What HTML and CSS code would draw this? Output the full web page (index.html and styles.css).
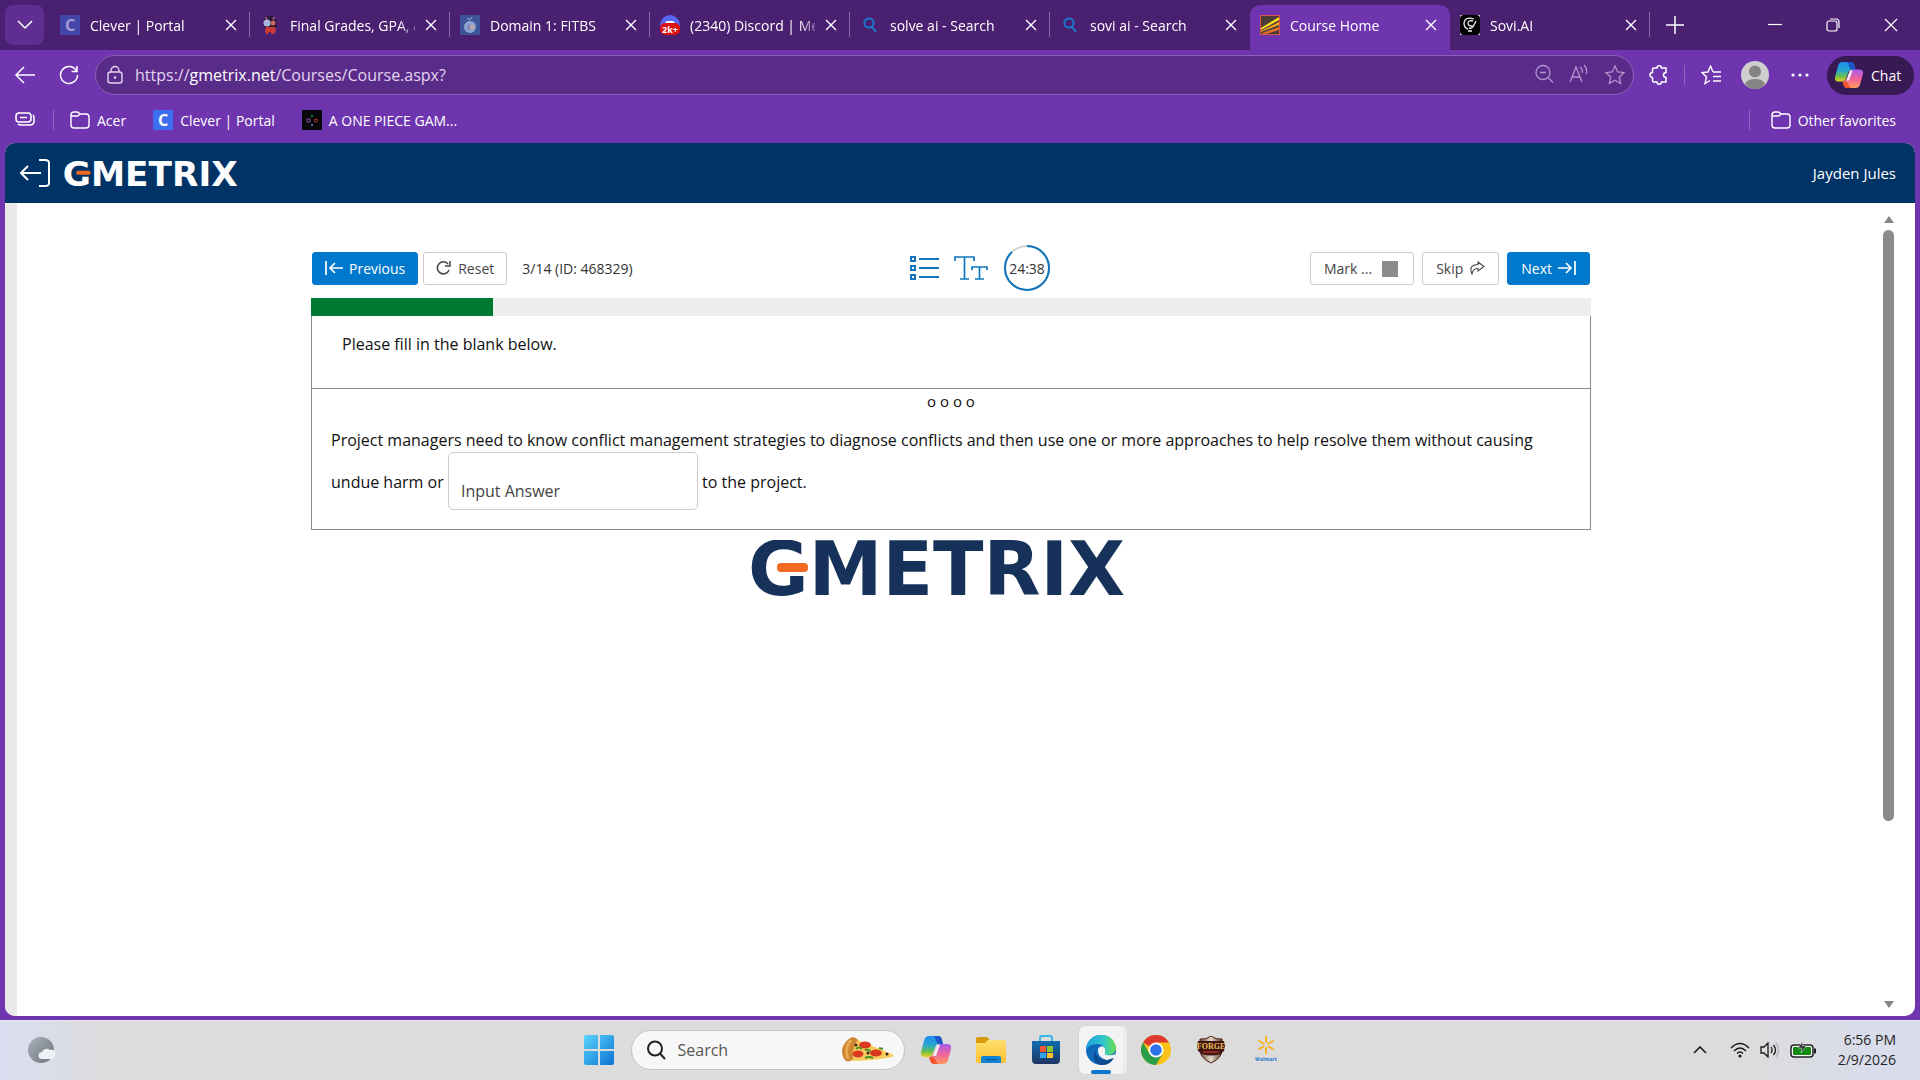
FILE: index.html
```html
<!DOCTYPE html>
<html lang="en">
<head>
<meta charset="utf-8">
<title>Course Home</title>
<link rel="stylesheet" href="styles.css">
</head>
<body>
<svg class="defs" aria-hidden="true">
  <defs>
    <linearGradient id="cpA" x1="0" y1="0" x2="0" y2="1"><stop offset="0" stop-color="#1d8df0"/><stop offset=".45" stop-color="#2aa7c9"/><stop offset=".75" stop-color="#6cc04a"/><stop offset="1" stop-color="#f0cf1c"/></linearGradient>
    <linearGradient id="cpB" x1="0" y1="0" x2="0" y2="1"><stop offset="0" stop-color="#a65cf0"/><stop offset=".5" stop-color="#f0629a"/><stop offset="1" stop-color="#ff9a5c"/></linearGradient>
    <linearGradient id="win" x1="0" y1="0" x2="1" y2="1"><stop offset="0" stop-color="#5cd3fb"/><stop offset="1" stop-color="#0a74d6"/></linearGradient>
    <linearGradient id="fold" x1="0" y1="0" x2="0" y2="1"><stop offset="0" stop-color="#ffdf6e"/><stop offset="1" stop-color="#fbc02f"/></linearGradient>
    <linearGradient id="store" x1="0" y1="0" x2="0" y2="1"><stop offset="0" stop-color="#0f6cb0"/><stop offset="1" stop-color="#1d3563"/></linearGradient>
    <linearGradient id="edgeTop" x1="0" y1="0" x2="1" y2="0"><stop offset="0" stop-color="#1f9fe0"/><stop offset=".6" stop-color="#32c8c8"/><stop offset="1" stop-color="#6be04a"/></linearGradient>
    <linearGradient id="shield" x1="0" y1="0" x2="1" y2="0"><stop offset="0" stop-color="#6b4a2c"/><stop offset=".5" stop-color="#e6dccb"/><stop offset="1" stop-color="#5a3a22"/></linearGradient>
    <linearGradient id="moon" x1="0" y1="0" x2="1" y2="1"><stop offset="0" stop-color="#a9b0b8"/><stop offset="1" stop-color="#6d757e"/></linearGradient>
    <symbol id="x" viewBox="0 0 12 12"><path d="M1 1l10 10M11 1L1 11" fill="none" stroke="currentColor" stroke-width="1.4"/></symbol>
    <symbol id="glass" viewBox="0 0 20 20"><g fill="none" stroke="#1b78d0" stroke-width="2"><circle cx="9" cy="8" r="4.6"/><path d="M12 12l4 4.5"/></g></symbol>
    <symbol id="folder" viewBox="0 0 20 20"><path d="M1 5a3 3 0 013-3h3q1 0 2 1l1 1h6a3 3 0 013 3v8a3 3 0 01-3 3H4a3 3 0 01-3-3zM1 6h6q1 0 2-1l1-1" fill="none" stroke="currentColor" stroke-width="1.4"/></symbol>
    <symbol id="copilot" viewBox="0 0 30 28">
      <path d="M8 0h9q3 0 4 4l1 4h-4q-3 0-4 4l-2 5q-1 4-5 4H4q-5 0-4-5L3 5Q4 0 8 0z" fill="url(#cpA)"/>
      <path d="M13 0h4q3 0 4 4l1 4h-4q-2 0-3-4-1-3-2-4z" fill="#1b55c9"/>
      <path d="M22 28h-9q-3 0-4-4l-1-3q3 0 5-4l2-5q1-4 5-4h6q5 0 4 5l-3 11q-1 4-5 4z" fill="url(#cpB)"/>
      <path d="M17 28h-4q-3 0-4-4l-1-3q5 0 6 2 1 4 3 5z" fill="#f2542d"/>
      <path d="M16 9h3l-4 11h-3z" fill="#f3e9f3"/>
    </symbol>
    <symbol id="gmetrix" viewBox="0 0 400 56">
      <text x="-3" y="55" class="wordmark">GMETRIX</text>
      <rect class="logo-gap" x="24" y="21" width="37" height="15"/>
      <rect x="26" y="23" width="31" height="9" rx="4" fill="#f26a21"/>
    </symbol>
  </defs>
</svg>

<div class="browser">
  <header class="tabstrip">
    <button class="tab-menu" aria-label="Tab actions"><svg width="16" height="10" viewBox="0 0 16 10"><path d="M1 1l7 7 7-7" fill="none" stroke="currentColor" stroke-width="1.5"/></svg></button>
    <nav class="tabs" aria-label="Tabs">
      <div class="tab"><span class="fav fav-c dim">C</span><span class="title">Clever | Portal</span><button class="close" aria-label="Close tab"><svg><use href="#x"/></svg></button></div>
      <div class="tab"><svg class="fav" viewBox="0 0 20 20"><path d="M4 5q1-4 6-4t6 4l1 6-3 3H6l-2-3z" fill="#2c1638"/><path d="M5 2l3 1-2 2zM15 2l-3 1 2 2z" fill="#b9727a"/><circle cx="7" cy="8" r="3.500" fill="#a9b7dd"/><circle cx="13" cy="8" r="2.500" fill="#c96a63"/><path d="M6 12h9l1 4-2 3h-3v-2h-2l-1 2H6l-1-3z" fill="#c93a34"/></svg><span class="title">Final Grades, GPA, &amp; Cre</span><button class="close" aria-label="Close tab"><svg><use href="#x"/></svg></button></div>
      <div class="tab"><svg class="fav" viewBox="0 0 20 20"><rect width="20" height="20" fill="#3f5398"/><path d="M7 3l3 2 2-3" stroke="#8fb6d8" fill="none"/><circle cx="10" cy="12" r="6" fill="#8ea6cf"/><path d="M7 13q0-4 3-4v6q-3 1-3-2z" fill="#7d86bb"/><circle cx="12" cy="12" r="2" fill="#c8a7a0"/></svg><span class="title">Domain 1: FITBS</span><button class="close" aria-label="Close tab"><svg><use href="#x"/></svg></button></div>
      <div class="tab"><svg class="fav" viewBox="0 0 20 20"><circle cx="10" cy="10" r="10" fill="#5865f2"/><path d="M5 8q1-2 3-2h4q2 0 3 2z" fill="#fff"/><rect y="8" width="20" height="12" rx="5" fill="#d8100f"/><text x="10" y="18" text-anchor="middle" class="badge">2k+</text></svg><span class="title">(2340) Discord | Messages</span><button class="close" aria-label="Close tab"><svg><use href="#x"/></svg></button></div>
      <div class="tab"><svg class="fav"><use href="#glass"/></svg><span class="title">solve ai - Search</span><button class="close" aria-label="Close tab"><svg><use href="#x"/></svg></button></div>
      <div class="tab"><svg class="fav"><use href="#glass"/></svg><span class="title">sovi ai - Search</span><button class="close" aria-label="Close tab"><svg><use href="#x"/></svg></button></div>
      <div class="tab active"><svg class="fav" viewBox="0 0 20 20"><rect x=".5" y=".5" width="19" height="19" fill="#4a3b35" stroke="#d9534f"/><path d="M1 13L19 2v3L1 15z" fill="#ffe11c"/><path d="M1 16L19 7v3L1 17z" fill="#f6a821"/><path d="M1 18.500l18-6.500v3L6 19z" fill="#e8702a"/></svg><span class="title">Course Home</span><button class="close" aria-label="Close tab"><svg><use href="#x"/></svg></button></div>
      <div class="tab"><svg class="fav" viewBox="0 0 20 20"><rect width="20" height="20" fill="#cfc3dd"/><rect width="20" height="20" rx="4"/><path d="M14 4Q5 1 4 8q0 5 4 6M13 6q-5-1-5 2t4 3q1 3-3 2M13 12l3-6M8 16h4" fill="none" stroke="#eee" stroke-width="1.3"/></svg><span class="title">Sovi.AI</span><button class="close" aria-label="Close tab"><svg><use href="#x"/></svg></button></div>
    </nav>
    <button class="new-tab" aria-label="New tab"><svg width="18" height="18" viewBox="0 0 18 18"><path d="M9 0v18M0 9h18" stroke="currentColor" stroke-width="1.5"/></svg></button>
    <div class="window-controls">
      <button aria-label="Minimize"><svg width="14" height="14" viewBox="0 0 14 14"><path d="M0 6.500h14" stroke="currentColor" stroke-width="1.2"/></svg></button>
      <button aria-label="Restore"><svg width="14" height="14" viewBox="0 0 14 14"><rect x="1" y="3" width="10" height="10" rx="2" fill="none" stroke="currentColor" stroke-width="1.2"/><path d="M4 1h6q3 0 3 3v6" fill="none" stroke="currentColor" stroke-width="1.2"/></svg></button>
      <button aria-label="Close"><svg width="14" height="14" viewBox="0 0 14 14"><path d="M1 1l12 12M13 1L1 13" stroke="currentColor" stroke-width="1.2"/></svg></button>
    </div>
  </header>

  <div class="toolbar">
    <button class="icon-btn" aria-label="Back"><svg width="22" height="18" viewBox="0 0 22 18"><path d="M10 1L2 9l8 8M2 9h19" fill="none" stroke="currentColor" stroke-width="1.5"/></svg></button>
    <button class="icon-btn" aria-label="Refresh"><svg width="20" height="20" viewBox="0 0 20 20"><path d="M17.500 6A8.500 8.500 0 1018.500 10M18 1v5.500h-5.500" fill="none" stroke="currentColor" stroke-width="1.5"/></svg></button>
    <div class="address">
      <svg width="18" height="20" viewBox="0 0 18 20"><rect x="2" y="7" width="14" height="11" rx="2.500" fill="none" stroke="currentColor" stroke-width="1.4"/><path d="M5 7V5.500a4 4 0 018 0V7" fill="none" stroke="currentColor" stroke-width="1.4"/><circle cx="9" cy="12.500" r="1.2" fill="currentColor"/></svg>
      <a class="url" href="#">https://<b>gmetrix.net</b>/Courses/Course.aspx?</a>
      <div class="address-icons">
        <svg width="20" height="20" viewBox="0 0 20 20"><g fill="none" stroke="currentColor" stroke-width="1.300"><circle cx="9" cy="8.500" r="7"/><path d="M14 13.500l5 5M6 8.500h6"/></g></svg>
        <svg width="20" height="20" viewBox="0 0 20 20"><path d="M1 18L7 3l6 15M3.500 13h7M11 3q3 2 2 6M15 1q4 4 2 9" fill="none" stroke="currentColor" stroke-width="1.300"/></svg>
        <svg width="22" height="22" viewBox="0 0 22 22"><path d="M11 2l2.700 6 6.300.7-4.700 4.300 1.300 6.500L11 16.200 5.400 19.500 6.700 13 2 8.700 8.300 8z" fill="none" stroke="currentColor" stroke-width="1.300"/></svg>
      </div>
    </div>
    <button class="icon-btn ext" aria-label="Extensions"><svg width="20" height="20" viewBox="0 0 20 20"><path d="M5 3h3a2.200 2.200 0 014.400 0H17v4.500a2.500 2.500 0 000 5V17h-4.600a2.200 2.200 0 01-4.400 0H5q-1.500 0-1.500-1.500v-3a2.500 2.500 0 010-5v-3Q3.500 3 5 3z" fill="none" stroke="currentColor" stroke-width="1.500"/></svg></button>
    <span class="divider"></span>
    <button class="icon-btn favs" aria-label="Favorites"><svg width="20" height="20" viewBox="0 0 20 20"><path d="M12 7L9.500 1 7 7 1 7.500 5.500 12 4 18.500l5-3M12 7h8M12 11.500h8M12 16h8" fill="none" stroke="currentColor" stroke-width="1.400"/></svg></button>
    <button class="icon-btn profile" aria-label="Profile"><svg width="28" height="28" viewBox="0 0 28 28"><circle cx="14" cy="14" r="14" fill="#d0cfce"/><circle cx="14" cy="10.500" r="6" fill="#868483"/><path d="M4 23q2-5 10-5t10 5q-4 5-10 5T4 23z" fill="#868483"/></svg></button>
    <button class="icon-btn more" aria-label="More"><svg width="18" height="4" viewBox="0 0 18 4"><g fill="currentColor"><circle cx="2" cy="2" r="1.600"/><circle cx="9" cy="2" r="1.600"/><circle cx="16" cy="2" r="1.600"/></g></svg></button>
    <button class="chat"><svg width="28" height="26"><use href="#copilot"/></svg>Chat</button>
  </div>

  <nav class="bookmarks" aria-label="Favorites bar">
    <button class="icon-btn" aria-label="Workspaces"><svg width="20" height="16" viewBox="0 0 20 16"><g fill="none" stroke="currentColor" stroke-width="1.600"><rect x="1" y="1" width="15" height="9" rx="3"/><path d="M5 5.500h7M3 12q1 1 3 1h9q4 0 4-4V6q0-2-1-3"/></g></svg></button>
    <span class="divider"></span>
    <a href="#" class="bm-acer"><svg class="fav"><use href="#folder"/></svg>Acer</a>
    <a href="#"><span class="fav fav-c">C</span>Clever | Portal</a>
    <a href="#"><svg class="fav" viewBox="0 0 20 20"><rect width="20" height="20" fill="#08080a"/><path d="M10 4l1.500 3h-3z" fill="#1c7a3c"/><rect x="5" y="9" width="3" height="3" fill="none" stroke="#7d4fa0"/><circle cx="14" cy="10.500" r="1.500" fill="none" stroke="#c0392b"/><path d="M9 14l2 2M11 14l-2 2" stroke="#4468a8"/></svg>A ONE PIECE GAM...</a>
    <div class="other"><span class="divider"></span><a href="#"><svg class="fav"><use href="#folder"/></svg>Other favorites</a></div>
  </nav>

  <div class="viewport">
    <header class="site-header">
      <a href="#" class="exit" aria-label="Exit"><svg width="30" height="28" viewBox="0 0 30 28"><path d="M8 7l-7 7 7 7M1 14h20M19 1h6q4 0 4 3v20q0 3-4 3h-6" fill="none" stroke="currentColor" stroke-width="2"/></svg></a>
      <svg class="logo-small" role="img" aria-label="GMetrix"><use href="#gmetrix"/></svg>
      <a href="#" class="user">Jayden Jules</a>
    </header>
    <div class="scroller">
      <main class="course">
        <div class="actions">
          <div class="group left">
            <button class="btn primary"><svg width="18" height="14" viewBox="0 0 18 14"><path d="M1 0v14M10 2L5 7l5 5M5 7h13" fill="none" stroke="currentColor" stroke-width="1.700"/></svg>Previous</button>
            <button class="btn"><svg width="16" height="14" viewBox="0 0 16 14"><path d="M12 3A6 6 0 1013 9M14 0v5H9" fill="none" stroke="currentColor" stroke-width="1.500"/></svg>Reset</button>
            <span class="counter">3/14 (ID: 468329)</span>
          </div>
          <div class="group tools">
            <button class="tool" aria-label="Question list"><svg width="30" height="26" viewBox="0 0 30 26"><g fill="none" stroke="#0f76bd" stroke-width="2"><rect x="1" y="2" width="4" height="4"/><rect x="1" y="11" width="4" height="4"/><rect x="1" y="20" width="4" height="4"/><path d="M9 4h20M9 13h20M9 22h20"/></g></svg></button>
            <button class="tool" aria-label="Text size"><svg width="34" height="26" viewBox="0 0 34 26"><path d="M1 6V2h19v4M10.500 2v22M6 24h9M18 15v-3h15v3M25.500 12v12M21 24h9" fill="none" stroke="#0f76bd" stroke-width="1.700"/></svg></button>
            <div class="timer"><svg viewBox="0 0 46 46"><circle cx="23" cy="23" r="22" fill="none" stroke="#d3d3d3" stroke-width="2"/><circle cx="23" cy="23" r="22" fill="none" stroke="#0f76bd" stroke-width="2" pathLength="100" stroke-dasharray="88 12" transform="rotate(-90 23 23)"/></svg><span>24:38</span></div>
          </div>
          <div class="group right">
            <label class="btn mark">Mark ...<input type="checkbox"></label>
            <button class="btn">Skip<svg width="16" height="14" viewBox="0 0 16 14"><path d="M9 1l6 4.500L9 10V7.500q-5-.5-6 5.500Q-1 4 9 3.500z" fill="none" stroke="currentColor" stroke-width="1.100"/></svg></button>
            <button class="btn primary">Next<svg width="18" height="14" viewBox="0 0 18 14"><path d="M17 0v14M8 2l5 5-5 5M13 7H0" fill="none" stroke="currentColor" stroke-width="1.700"/></svg></button>
          </div>
        </div>
        <div class="progress"><div class="progress-fill" style="width:14.2%"></div></div>
        <section class="question">
          <p class="instruction">Please fill in the blank below.</p>
          <div class="body">
            <div class="grip">o o o o</div>
            <p class="prompt">Project managers need to know conflict management strategies to diagnose conflicts and then use one or more approaches to help resolve them without causing undue harm or <input type="text" class="answer" placeholder="Input Answer" aria-label="Input Answer"> to the project.</p>
          </div>
        </section>
        <svg class="logo-large" role="img" aria-label="GMetrix"><use href="#gmetrix"/></svg>
      </main>
      <div class="scrollbar"><i class="arrow up"></i><i class="thumb"></i><i class="track"></i><i class="arrow down"></i></div>
    </div>
  </div>
</div>

<footer class="taskbar">
  <div class="weather"><svg width="28" height="28" viewBox="0 0 28 28"><circle cx="14" cy="14" r="13" fill="url(#moon)"/><path d="M15 23a3.500 3.500 0 010-7 5 5 0 018-2 4.500 4.500 0 013 9z" fill="#eef1f5"/></svg></div>
  <div class="apps">
    <button aria-label="Start"><svg width="30" height="30" viewBox="0 0 30 30"><path d="M2 0h12v14H0V2q0-2 2-2zM16 0h12q2 0 2 2v12H16zM0 16h14v14H2q-2 0-2-2zM16 16h14v12q0 2-2 2H16z" fill="url(#win)"/></svg></button>
    <label class="search"><svg width="20" height="20" viewBox="0 0 20 20"><g fill="none" stroke="#222" stroke-width="2"><circle cx="9" cy="8.500" r="7"/><path d="M14 13.500l5 5.500"/></g></svg><input type="text" placeholder="Search" aria-label="Search">
      <svg width="54" height="28" viewBox="0 0 54 28"><path d="M12 2l39 16q3 2 0 3-20 4-40 4z" fill="#f8cf5e"/><path d="M9 2Q14 0 17 4q-6 8-5 19-5 5-9 0-6-12 6-21z" fill="#cf8430"/><path d="M10 4q-7 9-3 19" stroke="#e9aa55" stroke-width="3" fill="none"/><g fill="#d9381e"><ellipse cx="24" cy="9" rx="6" ry="3.500"/><ellipse cx="17" cy="18" rx="5.500" ry="3.500"/><ellipse cx="35" cy="17" rx="6" ry="3.500"/></g><path d="M15 13q3-3 6 0M24 14q5-1 5 2M24 22q4-2 8 0M38 12l4 1" stroke="#4e8f27" stroke-width="2" fill="none"/><g fill="#3a2525"><circle cx="15" cy="9" r="1.500"/><circle cx="27" cy="17" r="1.500"/><circle cx="46" cy="18" r="1.500"/></g></svg></label>
    <button aria-label="Copilot"><svg width="30" height="28"><use href="#copilot"/></svg></button>
    <button aria-label="File Explorer"><svg width="30" height="28" viewBox="0 0 30 28"><path d="M2 1h9l3 3h4v6H0V3q0-2 2-2z" fill="#d99a0b"/><path d="M12 4h16q2 0 2 2v19q0 2-2 2H2q-2 0-2-2V7h9z" fill="url(#fold)"/><path d="M5 27v-5q0-2 2-2h16q2 0 2 2v5z" fill="#1583d0"/><path d="M10 23.500h11" stroke="#0b5ea8" stroke-width="1.500"/></svg></button>
    <button aria-label="Store"><svg width="30" height="30" viewBox="0 0 30 30"><path d="M9 7V3q0-2 2-2h8q2 0 2 2v4" fill="none" stroke="#39b7ee" stroke-width="2"/><path d="M1 6h28v19q0 4-4 4H5q-4 0-4-4z" fill="url(#store)"/><path d="M9 11h6v6H9z" fill="#f05a30"/><path d="M16 11h6v6h-6z" fill="#8cc52f"/><path d="M9 18h6v5H9z" fill="#35a7ee"/><path d="M16 18h6v5h-6z" fill="#fcc52c"/></svg></button>
    <button class="running" aria-label="Edge"><svg width="30" height="30" viewBox="0 0 30 30"><circle cx="15" cy="15" r="15" fill="#0f69bd"/><path d="M0 15Q1 1 15 0q13 0 15 13-1 8-10 7-3-1-1-4 0-7-8-7-8 0-11 6z" fill="url(#edgeTop)"/><path d="M12 14q2-4 6-2 2 2 1 5-1 3 2 3 4 1 8-1v6q-4 1-9 0-9-3-8-11z" fill="#f3f3f3"/><path d="M9 16q1 9 12 9l7-2q-5 8-13 7Q5 28 9 16z" fill="#0c4a91"/></svg></button>
    <button aria-label="Chrome"><svg width="30" height="30" viewBox="0 0 30 30"><circle cx="15" cy="15" r="15" fill="#fbc116"/><path d="M15 15L2 7.500A15 15 0 0128 7.500H15z" fill="#de3b2e"/><path d="M2 7.500A15 15 0 0015 30l6.500-11.300L15 15 8.500 18.700z" fill="#2a9e49"/><circle cx="15" cy="15" r="7.500" fill="#fff"/><circle cx="15" cy="15" r="5.800" fill="#2f73e8"/></svg></button>
    <button aria-label="Forge of Empires"><svg width="30" height="28" viewBox="0 0 30 28"><path d="M4 3q6 1 11-3 5 4 11 3v11q0 8-11 13Q4 22 4 14z" fill="url(#shield)" stroke="#4a1712"/><path d="M2 5h26l1 5-1 5-4 3q-9 3-18 0l-4-3-1-5z" fill="#3f1512"/><text x="15" y="13" text-anchor="middle" class="forge">FORGE</text><path d="M7 16h16" stroke="#8f2a1c" stroke-width="2"/></svg></button>
    <button aria-label="Walmart"><svg width="30" height="28" viewBox="0 0 30 28"><path d="M15 1v5M15 12v5M8 5l4.500 2.500M17.500 10.500L22 13M8 13l4.500-2.500M17.500 7.500L22 5" stroke="#fbb01c" stroke-width="2" stroke-linecap="round"/><text x="15" y="25" text-anchor="middle" class="walmart">Walmart</text></svg></button>
  </div>
  <div class="tray">
    <svg width="14" height="8" viewBox="0 0 14 8"><path d="M1 7l6-6 6 6" fill="none" stroke="#1a1a1a" stroke-width="1.600"/></svg>
    <svg class="wifi" width="20" height="16" viewBox="0 0 20 16"><g fill="none" stroke="#1a1a1a" stroke-width="1.400"><path d="M1 6q9-9 18 0M4 9q6-6 12 0M7 11.500q3-3 6 0"/></g><circle cx="10" cy="14" r="1.600" fill="#1a1a1a"/></svg>
    <svg width="20" height="16" viewBox="0 0 20 16"><path d="M1 5h3l4-4v14l-4-4H1zM11 5q2 3 0 6M13.500 3q4 5 0 10" fill="none" stroke="#1a1a1a" stroke-width="1.300"/><path d="M16 1q5 7 0 14" fill="none" stroke="#b5b5b5" stroke-width="1.300"/></svg>
    <svg class="battery" width="26" height="18" viewBox="0 0 26 18"><rect x="1" y="4" width="22" height="12" rx="3" fill="#fff" stroke="#222" stroke-width="1.500"/><rect x="3" y="6" width="18" height="8" rx="1" fill="#128a12"/><path d="M25 7.500v5" stroke="#222" stroke-width="2"/><path d="M13 0L8 7h4l-1 5 5-7h-4z" fill="#222" stroke="#dcdcdc" stroke-width=".6"/></svg>
    <time class="clock">6:56 PM<br>2/9/2026</time>
  </div>
</footer>
</body>
</html>
```
FILE: styles.css
```css
* { box-sizing: border-box; }
html, body { height: 100%; }
body {
  margin: 0;
  display: flex;
  flex-direction: column;
  min-height: 100vh;
  overflow: hidden;
  font-family: "Open Sans", "Noto Sans", sans-serif;
  font-size: 14px;
  color: #111;
  background: #6e35ae;
}
button { font: inherit; color: inherit; background: none; border: 0; padding: 0; }
a { color: inherit; text-decoration: none; }
p { margin: 0; }
svg { display: block; flex: none; }
.defs { position: absolute; width: 0; height: 0; }

.browser { flex: 1; min-height: 0; display: flex; flex-direction: column; color: #fff; }

/* Tab strip */
.tabstrip { display: flex; height: 50px; background: #4a2070; padding-left: 5px; }
.tab-menu { width: 39px; height: 40px; margin: 5px 6px 0 0; border-radius: 8px; background: #5f2e93; display: grid; place-items: center; }
.tabs { display: flex; flex: 0 1 1600px; min-width: 0; }
.tab { flex: 1 1 0; min-width: 0; display: flex; align-items: center; gap: 10px; padding: 0 13px 0 10px; position: relative; }
.tab::after { content: ""; position: absolute; right: 0; top: 12px; width: 1px; height: 25px; background: #8a6aa8; }
.tab.active { background: #6e35ae; border-radius: 10px 10px 0 0; margin-top: 5px; padding-bottom: 5px; }
.tab.active::after, .tab:has(+ .active)::after { display: none; }
.fav { width: 20px; height: 20px; flex: none; }
.fav-c { display: grid; place-items: center; background: #3b6ff0; color: #fff; font-weight: 700; font-size: 16px; line-height: 20px; }
.fav-c.dim { background: #4345a8; color: #a99fd8; }
.badge { font: 700 9px "Open Sans", sans-serif; fill: #fff; }
.title { flex: 1; min-width: 0; overflow: hidden; white-space: nowrap; mask-image: linear-gradient(90deg, #000 108px, transparent 134px); }
.close { width: 12px; height: 12px; }
.close svg { width: 12px; height: 12px; }
.new-tab { width: 50px; display: grid; place-items: center; }
.window-controls { margin-left: auto; display: flex; }
.window-controls button { width: 58px; display: grid; place-items: center; }

/* Address row */
.toolbar { display: flex; align-items: center; height: 50px; padding: 0 6px 0 3px; }
.icon-btn { width: 44px; height: 40px; display: grid; place-items: center; flex: none; }
.address { flex: 1; min-width: 0; height: 40px; margin-left: 4px; padding: 0 7px 0 10px; display: flex; align-items: center; gap: 11px; border: 1px solid #8c60b8; border-radius: 20px; background: #5a2c8a; color: #e3d5ef; }
.url { font-size: 16px; }
.url b { font-weight: 400; color: #fff; }
.address-icons { margin-left: auto; display: flex; gap: 15px; color: #b592d0; }
.divider { width: 1px; height: 20px; background: #9067bd; flex: none; }
.icon-btn.ext { width: 50px; }
.icon-btn.favs { width: 52px; }
.icon-btn.profile { width: 36px; }
.icon-btn.more { width: 54px; }
.chat { width: 87px; height: 39px; border-radius: 20px; background: #371a54; display: flex; align-items: center; gap: 8px; padding-left: 8px; }

/* Favorites row */
.bookmarks { display: flex; align-items: center; height: 43px; padding: 0 24px 3px 3px; }
.bookmarks .icon-btn { margin-right: 6px; }
.bookmarks a { display: flex; align-items: center; gap: 7px; margin-left: 27px; white-space: nowrap; }
.bookmarks .bm-acer { margin-left: 16px; }
.other { margin-left: auto; display: flex; align-items: center; }
.bookmarks .other a { margin-left: 21px; }

/* Page area */
.viewport { flex: 1; min-height: 0; margin: 0 5px 4px; border-radius: 10px; overflow: hidden; display: flex; flex-direction: column; background: #fff; color: #111; }
.site-header { height: 60px; flex: none; display: flex; align-items: center; gap: 14px; padding: 0 19px 0 15px; background: #003366; color: #fff; }
.wordmark { font: 700 74px "DejaVu Sans", sans-serif; fill: currentColor; }
.logo-small { width: 186px; height: 26px; --gap: #003366; }
.logo-gap { fill: var(--gap); }
.user { margin-left: auto; font-size: 15px; }
.scroller { flex: 1; min-height: 0; display: flex; border-left: 12px solid #e9e9e9; padding-right: 18px; }
.course { flex: 1; min-width: 0; padding: 42px 15px 0 20px; }
.course > * { max-width: 1280px; margin-left: auto; margin-right: auto; }

.actions { display: grid; grid-template-columns: 1fr auto 1fr; align-items: center; height: 46px; }
.group { display: flex; align-items: center; }
.group.left { gap: 5px; padding-left: 1px; }
.group.right { gap: 8px; padding-right: 1px; justify-content: flex-end; }
.group.tools { gap: 14px; padding-left: 58px; }
.btn { height: 33px; padding: 0 12px; display: flex; align-items: center; gap: 6px; border: 1px solid #ccc; border-radius: 3px; background: #fff; color: #444; }
.btn.primary { background: #0078cc; border-color: #0078cc; color: #fff; }
.right .btn { padding: 0 13px; }
.right .mark { gap: 10px; padding-right: 15px; }
.mark input { appearance: none; width: 16px; height: 16px; margin: 2px 0 0; background: #8c8c8c; }
.counter { margin-left: 10px; color: #333; }
.timer { display: grid; place-items: center; width: 46px; height: 46px; margin-left: 2px; color: #333; }
.timer > * { grid-area: 1 / 1; }
.timer svg { width: 46px; height: 46px; }

.progress { height: 18px; margin-top: 7px; background: #eee; }
.progress-fill { height: 100%; background: #007a33; }
.question { border: 1px solid #8a8a8a; border-top: 0; font-size: 16px; color: #111; }
.instruction { height: 73px; padding: 16px 30px; line-height: 24px; border-bottom: 1px solid #8a8a8a; }
.grip { text-align: center; font-size: 15px; line-height: 20px; padding-top: 2px; }
.prompt { padding: 17px 16px 13px 19px; line-height: 24px; }
.answer { width: 250px; height: 58px; margin: 0 0 6px; padding: 20px 12px 0; border: 1px solid #ccc; border-radius: 5px; font: inherit; color: #333; vertical-align: middle; }
.answer::placeholder { color: #444; opacity: 1; }
.logo-large { --gap: #fff; width: 400px; height: 56px; margin-top: 10px; color: #16325a; }

.scrollbar { width: 17px; flex: none; display: flex; flex-direction: column; align-items: center; padding: 13px 0 8px; }
.arrow { border: 5px solid transparent; }
.arrow.up { border-bottom: 7px solid #858585; border-top: 0; }
.arrow.down { border-top: 7px solid #858585; border-bottom: 0; }
.thumb { width: 11px; margin-top: 7px; flex: 590; border-radius: 6px; background: #8b8b8b; }
.track { flex: 180; }

/* Taskbar */
.taskbar { height: 60px; flex: none; display: grid; grid-template-columns: 1fr auto 1fr; align-items: center; padding-bottom: 1px; background: linear-gradient(90deg, #dadef0, #dcdcdc 6%, #dcdcdc 91%, #d9dcea 97%); border-top: 1px solid #e9e6ef; color: #1f1f1f; }
.weather { padding-left: 27px; }
.apps { display: flex; align-items: center; gap: 11px; padding-right: 56px; }
.apps button { width: 44px; height: 48px; display: grid; place-items: center; }
.search { display: flex; align-items: center; width: 274px; height: 40px; margin: 0 -2px 0 -1px; padding: 0 9px 0 14px; gap: 12px; border: 1px solid #c6c6c6; border-radius: 20px; background: #f7f7f7; }
.search input { flex: 1; min-width: 0; border: 0; padding: 0; background: none; font: inherit; font-size: 16px; }
.search input::placeholder { color: #555; opacity: 1; }
.apps .running { background: #f3f3f3; border-radius: 5px; box-shadow: 4px 0 0 #ebebeb, 0 0 1px #aaa; position: relative; }
.running::after { content: ""; position: absolute; bottom: 0; left: 12px; width: 20px; height: 4px; border-radius: 2px; background: #0a78d0; }
.forge { font: 700 8px "Liberation Serif", serif; fill: #f0c25a; }
.walmart { font: 700 5px "Open Sans", sans-serif; fill: #1d78d0; }
.tray { display: flex; align-items: center; justify-content: flex-end; padding-right: 24px; }
.wifi { margin: 0 10px 0 23px; }
.battery { margin: 0 22px 0 10px; }
.clock { text-align: right; line-height: 20px; }
```
